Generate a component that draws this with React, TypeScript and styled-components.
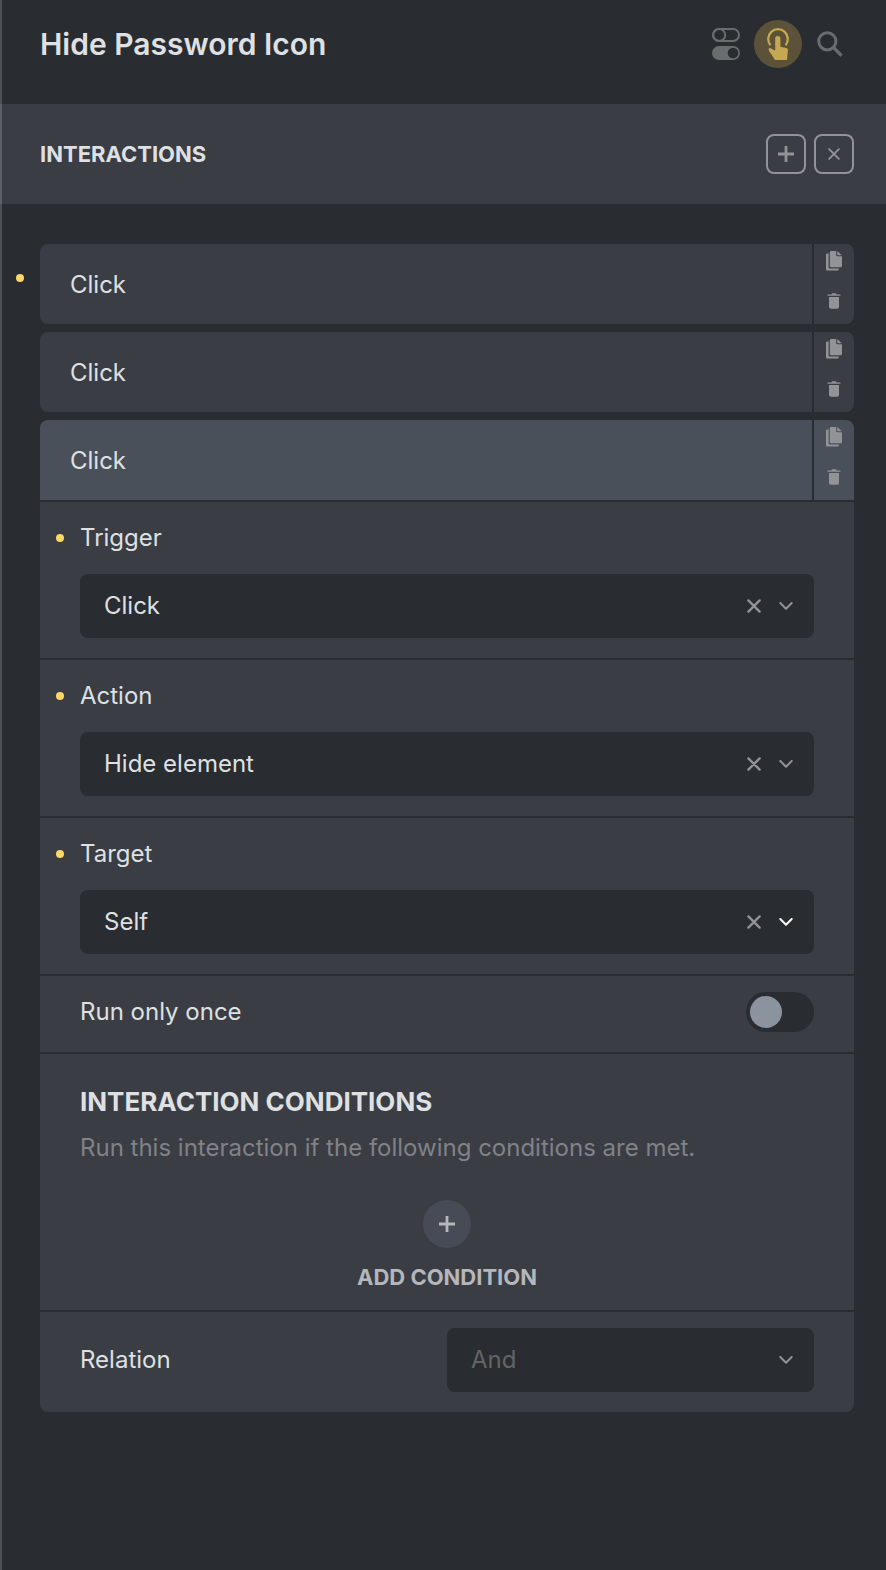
import React, { useState } from "react";
import styled, { createGlobalStyle, css } from "styled-components";

const color = {
  bg: "#292c30",
  panel: "#3a3d44",
  active: "#4a505a",
  raised: "#464b55",
  text: "#dfe0e2",
  muted: "#818286",
  faint: "#626567",
  icon: "#919397",
  knob: "#8b949e",
  yellow: "#ffd766",
};

const GlobalStyle = createGlobalStyle`
  * { box-sizing: border-box; }
  body {
    margin: 0;
    background: ${color.bg};
    color: ${color.text};
    font: 400 24px/40px Inter, "Liberation Sans", sans-serif;
  }
  button, select, input { font: inherit; color: inherit; margin: 0; }
  button {
    padding: 0;
    border: 0;
    background: none;
    cursor: pointer;
  }
  svg { display: block; }
  h1, h2, h3, p, ul { margin: 0; padding: 0; }
`;

const Panel = styled.main`
  position: relative;
  min-height: 100vh;

  &::before {
    content: "";
    position: absolute;
    inset: 0 auto 0 0;
    width: 2px;
    background: rgba(255, 255, 255, 0.18);
  }
`;

const Header = styled.header`
  display: flex;
  align-items: center;
  justify-content: space-between;
  padding: 20px 32px 36px 40px;
`;

const Title = styled.h1`
  font-size: 30px;
  font-weight: 600;
  line-height: 48px;
`;

const Tools = styled.div`
  display: flex;
  gap: 4px;
`;

const ToolButton = styled.button<{ $on?: boolean }>`
  display: grid;
  place-items: center;
  width: 48px;
  height: 48px;
  border-radius: 50%;
  color: ${(p) => (p.$on ? "#c6a850" : "#6a6d70")};
  background: ${(p) => (p.$on ? "#5b5239" : "transparent")};
`;

const SectionBar = styled.div`
  display: flex;
  align-items: center;
  justify-content: space-between;
  padding: 30px 32px 30px 40px;
  background: ${color.panel};
`;

const SectionTitle = styled.h2`
  font-size: 22px;
  font-weight: 700;
  text-transform: uppercase;
`;

const SectionActions = styled.div`
  display: flex;
  gap: 8px;
`;

const OutlineButton = styled.button`
  display: grid;
  place-items: center;
  width: 40px;
  height: 40px;
  border: 2px solid ${color.icon};
  border-radius: 8px;
  color: ${color.icon};
`;

const List = styled.ul`
  display: flex;
  flex-direction: column;
  gap: 8px;
  padding: 40px 32px 40px 40px;
  list-style: none;
`;

const Item = styled.li`
  position: relative;
`;

const dot = css`
  content: "";
  position: absolute;
  left: -24px;
  width: 8px;
  height: 8px;
  border-radius: 50%;
  background: ${color.yellow};
`;

const ItemHead = styled.div<{ $open?: boolean; $changed?: boolean }>`
  display: flex;
  gap: 2px;
  height: 80px;

  > * {
    background: ${(p) => (p.$open ? color.active : color.panel)};
  }
  > :first-child {
    border-radius: ${(p) => (p.$open ? "8px 0 0 0" : "8px 0 0 8px")};
  }
  > :last-child {
    border-radius: ${(p) => (p.$open ? "0 8px 0 0" : "0 8px 8px 0")};
  }
  ${(p) =>
    p.$changed &&
    css`
      &::before {
        ${dot}
        top: 30px;
      }
    `}
`;

const ItemName = styled.button`
  flex: 1;
  padding: 2px 30px 0;
  text-align: left;
`;

const ItemActions = styled.div`
  display: flex;
  flex-direction: column;
  width: 40px;
`;

const ItemAction = styled.button`
  display: grid;
  place-items: center;
  height: 40px;
  padding-bottom: 6px;
  color: ${color.icon};
`;

const ItemBody = styled.div`
  display: flex;
  flex-direction: column;
  gap: 2px;
  padding-top: 2px;

  > * {
    background: ${color.panel};
  }
  > :last-child {
    border-radius: 0 0 8px 8px;
  }
`;

const Field = styled.div`
  display: flex;
  flex-direction: column;
  gap: 16px;
  padding: 16px 40px 20px;
`;

const InlineField = styled.div`
  display: flex;
  align-items: center;
  justify-content: space-between;
  padding: 16px 40px 20px;
`;

const SplitField = styled.div`
  display: grid;
  grid-template-columns: 1fr 1fr;
  align-items: center;
  padding: 16px 40px 20px;
`;

const Label = styled.label<{ $changed?: boolean }>`
  position: relative;
  ${(p) =>
    p.$changed &&
    css`
      &::before {
        ${dot}
        top: 16px;
      }
    `}
`;

const SelectBox = styled.div`
  display: grid;
  grid-template-columns: 1fr 32px 32px;
  align-items: center;
  height: 64px;
  padding-right: 12px;
  border-radius: 8px;
  background: ${color.bg};
`;

const Select = styled.select<{ $placeholder?: boolean }>`
  grid-area: 1 / 1 / 2 / -1;
  appearance: none;
  height: 64px;
  padding: 0 64px 0 24px;
  border: 0;
  outline: 0;
  background: none;
  color: ${(p) => (p.$placeholder ? color.faint : color.text)};
`;

const ClearButton = styled.button`
  grid-area: 1 / 2;
  display: grid;
  place-items: center;
  height: 32px;
  color: ${color.icon};
`;

const Arrow = styled.span<{ $focus?: boolean }>`
  grid-area: 1 / 3;
  display: grid;
  place-items: center;
  pointer-events: none;
  color: ${(p) => (p.$focus ? "#ffffff" : color.icon)};
`;

const Switch = styled.input`
  appearance: none;
  width: 68px;
  height: 40px;
  padding: 4px;
  border-radius: 20px;
  background: ${color.bg};
  cursor: pointer;

  &::before {
    content: "";
    display: block;
    width: 32px;
    height: 32px;
    border-radius: 50%;
    background: ${color.knob};
  }
  &:checked::before {
    margin-left: auto;
    background: ${color.yellow};
  }
`;

const Conditions = styled.section`
  display: flex;
  flex-direction: column;
  padding: 32px 40px 20px;
`;

const ConditionsTitle = styled.h3`
  font-size: 26px;
  font-weight: 700;
  line-height: 32px;
  text-transform: uppercase;
`;

const Description = styled.p`
  margin-top: 10px;
  color: ${color.muted};
`;

const AddButton = styled.button`
  display: flex;
  flex-direction: column;
  align-items: center;
  align-self: center;
  gap: 16px;
  margin-top: 32px;
  color: #b5b7ba;
  font-size: 22px;
  font-weight: 700;
  line-height: 26px;
  text-transform: uppercase;
`;

const AddCircle = styled.span`
  display: grid;
  place-items: center;
  width: 48px;
  height: 48px;
  border-radius: 50%;
  background: ${color.raised};
`;

const TogglesIcon = () => (
  <svg width="28" height="32" viewBox="0 0 28 32" aria-hidden="true">
    <rect x="1" y="1" width="26" height="12" rx="6" fill="none" stroke="currentColor" strokeWidth="2" />
    <circle cx="7.2" cy="7" r="6" fill="none" stroke="currentColor" strokeWidth="2" />
    <rect x="0" y="18" width="28" height="14" rx="7" fill="currentColor" />
    <circle cx="21" cy="25" r="5.3" fill={color.bg} />
  </svg>
);

const TouchIcon = () => (
  <svg width="24" height="32" viewBox="0 0 24 32" aria-hidden="true">
    <path d="M4.4 17.2A9.8 9.8 0 1 1 19.6 17.2" fill="none" stroke="currentColor" strokeWidth="2.3" />
    <path
      d="M9.2 10.6a2.6 2.6 0 0 1 5.2 0v8.2l5.8 1.3c1.2.3 1.8 1.1 1.7 2.3L21 32H9.1L3.2 23.2c-.7-1.2-.7-2.7.1-3.5l5.9 2.7z"
      fill="currentColor"
    />
  </svg>
);

const SearchIcon = () => (
  <svg width="26" height="26" viewBox="0 0 26 26" fill="none" stroke="currentColor" strokeWidth="3" aria-hidden="true">
    <circle cx="10.3" cy="10.3" r="8.6" />
    <path d="M16.4 16.4L24.6 24.6" strokeWidth="3.4" />
  </svg>
);

const PlusIcon = ({ weight = 2 }: { weight?: number }) => (
  <svg width="18" height="18" viewBox="0 0 18 18" stroke="currentColor" strokeWidth={weight} aria-hidden="true">
    <path d="M9 1V17M1 9H17" />
  </svg>
);

const CloseIcon = ({ size = 14, weight = 2.4 }: { size?: number; weight?: number }) => (
  <svg width={size} height={size} viewBox="0 0 14 14" stroke="currentColor" strokeWidth={weight} strokeLinecap="round" aria-hidden="true">
    <path d="M1.4 1.4L12.6 12.6M12.6 1.4L1.4 12.6" />
  </svg>
);

const ChevronIcon = () => (
  <svg width="14" height="8" viewBox="0 0 14 8" fill="none" stroke="currentColor" strokeWidth="2" strokeLinecap="round" strokeLinejoin="round" aria-hidden="true">
    <path d="M1.3 1L7 6.7L12.7 1" />
  </svg>
);

const CopyIcon = () => (
  <svg width="16" height="20" viewBox="0 0 16 20" fill="currentColor" aria-hidden="true">
    <path d="M5 0H10.2V4a1.2 1.2 0 0 0 1.2 1.2H16V15a1.2 1.2 0 0 1-1.2 1.2H5A1.2 1.2 0 0 1 3.8 15V1.2A1.2 1.2 0 0 1 5 0z" />
    <path d="M11.2 0L15.8 4.2H11.8a.6.6 0 0 1-.6-.6z" />
    <path d="M2.6 2.6H1.2A1.2 1.2 0 0 0 0 3.8V18.2a1.2 1.2 0 0 0 1.2 1.2H11.6a1.2 1.2 0 0 0 1.2-1.2V17.4H3.8a1.2 1.2 0 0 1-1.2-1.2z" />
  </svg>
);

const TrashIcon = () => (
  <svg width="14" height="16" viewBox="0 0 14 16" fill="currentColor" aria-hidden="true">
    <path d="M.6 1.4H4.4L5.2.3H8.8L9.6 1.4H13.4V2.7H.6z" />
    <path d="M2 3.9H12V14a1.8 1.8 0 0 1-1.8 1.8H3.8A1.8 1.8 0 0 1 2 14z" />
  </svg>
);

type HeadProps = { name: string; open?: boolean; changed?: boolean };

const InteractionHead = ({ name, open, changed }: HeadProps) => (
  <ItemHead $open={open} $changed={changed}>
    <ItemName type="button" aria-expanded={!!open}>
      {name}
    </ItemName>
    <ItemActions>
      <ItemAction type="button" aria-label="Duplicate">
        <CopyIcon />
      </ItemAction>
      <ItemAction type="button" aria-label="Delete">
        <TrashIcon />
      </ItemAction>
    </ItemActions>
  </ItemHead>
);

type SelectFieldProps = { id: string; label: string; options: string[]; focus?: boolean };

const SelectField = ({ id, label, options, focus }: SelectFieldProps) => {
  const [value, setValue] = useState(options[0]);
  return (
    <Field>
      <Label htmlFor={id} $changed={value !== ""}>
        {label}
      </Label>
      <SelectBox>
        <Select id={id} value={value} onChange={(e) => setValue(e.target.value)}>
          <option value="" />
          {options.map((option) => (
            <option key={option}>{option}</option>
          ))}
        </Select>
        <ClearButton type="button" aria-label={`Clear ${label}`} onClick={() => setValue("")}>
          <CloseIcon />
        </ClearButton>
        <Arrow $focus={focus}>
          <ChevronIcon />
        </Arrow>
      </SelectBox>
    </Field>
  );
};

export default function App() {
  const [once, setOnce] = useState(false);
  return (
    <>
      <GlobalStyle />
      <Panel>
        <Header>
          <Title>Hide Password Icon</Title>
          <Tools>
            <ToolButton type="button" aria-label="Conditions">
              <TogglesIcon />
            </ToolButton>
            <ToolButton type="button" aria-label="Interactions" $on>
              <TouchIcon />
            </ToolButton>
            <ToolButton type="button" aria-label="Search">
              <SearchIcon />
            </ToolButton>
          </Tools>
        </Header>

        <SectionBar>
          <SectionTitle>Interactions</SectionTitle>
          <SectionActions>
            <OutlineButton type="button" aria-label="Add interaction">
              <PlusIcon weight={2.8} />
            </OutlineButton>
            <OutlineButton type="button" aria-label="Close">
              <CloseIcon size={12} weight={2.2} />
            </OutlineButton>
          </SectionActions>
        </SectionBar>

        <List>
          <Item>
            <InteractionHead name="Click" changed />
          </Item>
          <Item>
            <InteractionHead name="Click" />
          </Item>
          <Item>
            <InteractionHead name="Click" open />
            <ItemBody>
              <SelectField id="trigger" label="Trigger" options={["Click", "Hover"]} />
              <SelectField id="action" label="Action" options={["Hide element", "Show element"]} />
              <SelectField id="target" label="Target" options={["Self", "CSS selector"]} focus />
              <InlineField>
                <Label htmlFor="once">Run only once</Label>
                <Switch id="once" type="checkbox" role="switch" checked={once} onChange={() => setOnce(!once)} />
              </InlineField>
              <Conditions>
                <ConditionsTitle>Interaction conditions</ConditionsTitle>
                <Description>Run this interaction if the following conditions are met.</Description>
                <AddButton type="button">
                  <AddCircle>
                    <PlusIcon weight={2.8} />
                  </AddCircle>
                  Add condition
                </AddButton>
              </Conditions>
              <SplitField>
                <Label htmlFor="relation">Relation</Label>
                <SelectBox>
                  <Select id="relation" defaultValue="And" $placeholder>
                    <option>And</option>
                    <option>Or</option>
                  </Select>
                  <Arrow>
                    <ChevronIcon />
                  </Arrow>
                </SelectBox>
              </SplitField>
            </ItemBody>
          </Item>
        </List>
      </Panel>
    </>
  );
}
